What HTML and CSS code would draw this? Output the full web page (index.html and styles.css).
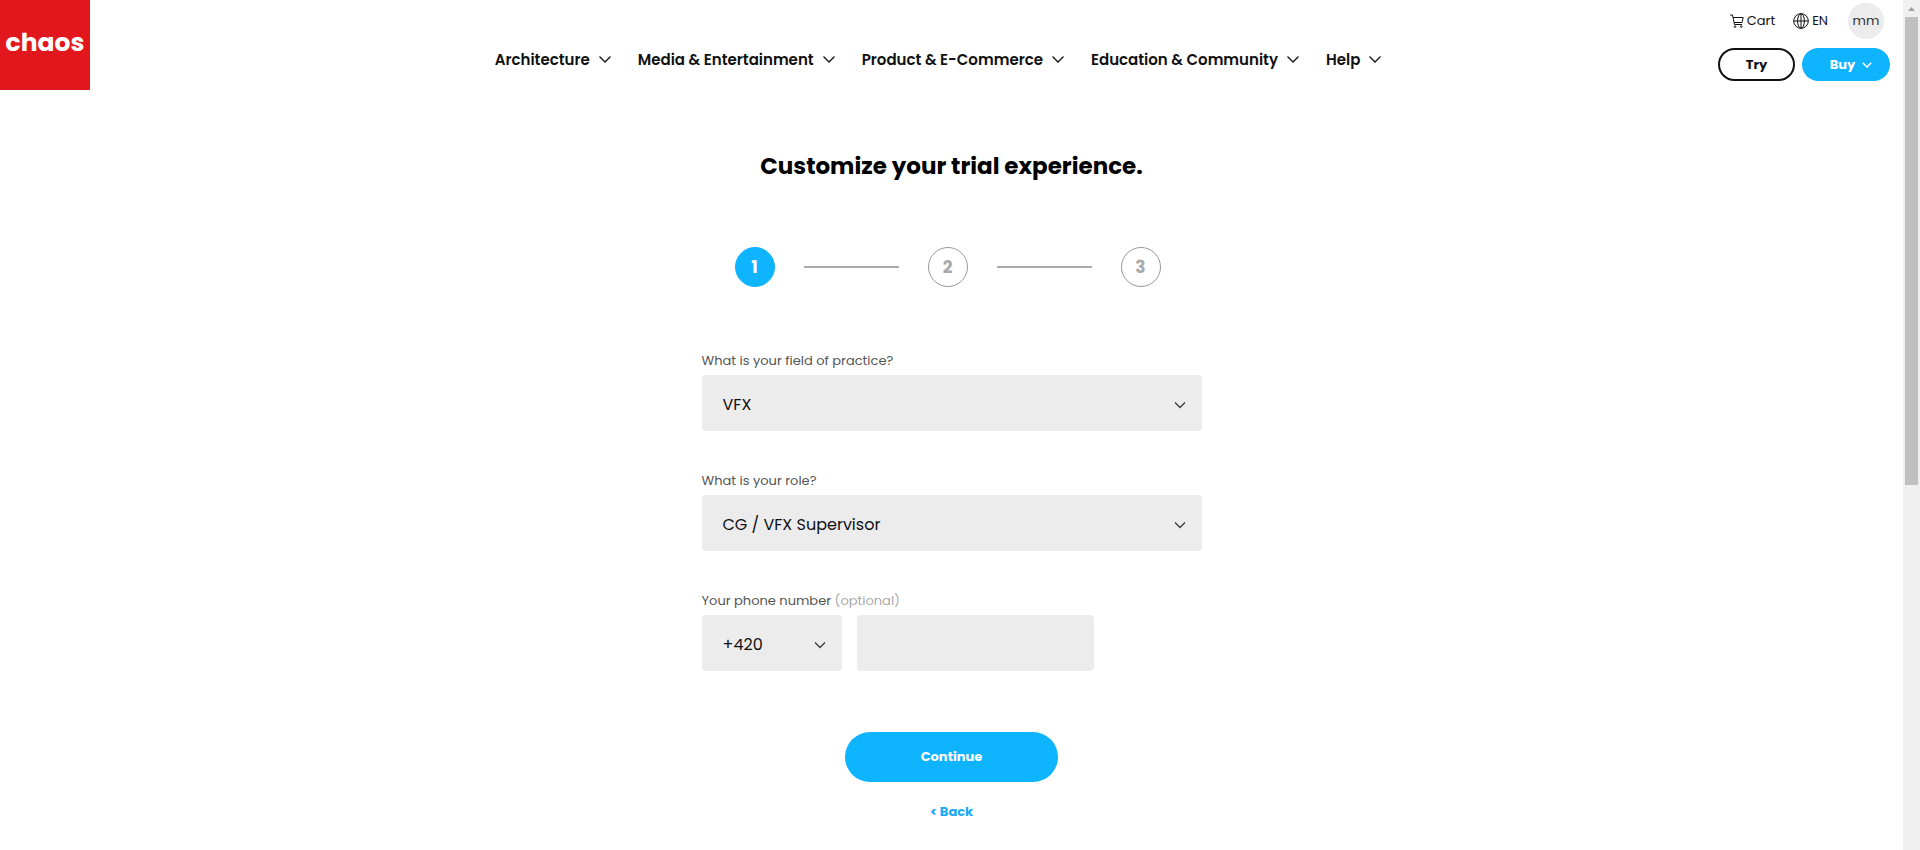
FILE: index.html
```html
<!DOCTYPE html>
<html lang="en">
<head>
    <meta charset="UTF-8">
    <meta name="viewport" content="width=device-width, initial-scale=1.0">
    <title>Chaos - Trial</title>
    <link rel="stylesheet" href="styles.css">
</head>
<body>
    <div class="page">
        <header class="header">
            <a class="logo" href="#">chaos</a>
            <nav class="nav">
                <a href="#">Architecture <svg class="arrow" viewBox="0 0 12 7"><path d="M0.5 0.5L6 6L11.5 0.5"/></svg></a>
                <a href="#">Media &amp; Entertainment <svg class="arrow" viewBox="0 0 12 7"><path d="M0.5 0.5L6 6L11.5 0.5"/></svg></a>
                <a href="#">Product &amp; E-Commerce <svg class="arrow" viewBox="0 0 12 7"><path d="M0.5 0.5L6 6L11.5 0.5"/></svg></a>
                <a href="#">Education &amp; Community <svg class="arrow" viewBox="0 0 12 7"><path d="M0.5 0.5L6 6L11.5 0.5"/></svg></a>
                <a href="#">Help <svg class="arrow" viewBox="0 0 12 7"><path d="M0.5 0.5L6 6L11.5 0.5"/></svg></a>
            </nav>
            <div class="tools">
                <div class="account">
                    <a class="cart" href="#">
                        <svg width="14" height="14" viewBox="0 0 14 14"><path d="M0 1H2.5L4.5 10.5H12M3 3.5H13.2L12 8.5H4.2"/><circle cx="5" cy="12.6" r="0.8"/><circle cx="11.3" cy="12.6" r="0.8"/></svg>
                        Cart
                    </a>
                    <a class="lang" href="#">
                        <svg width="16" height="16" viewBox="0 0 16 16"><circle cx="8" cy="8" r="7.3"/><ellipse cx="8" cy="8" rx="3.4" ry="7.3"/><path d="M0.7 8H15.3M8 0.7V15.3"/></svg>
                        EN
                    </a>
                    <a class="avatar" href="#">mm</a>
                </div>
                <div class="actions">
                    <button class="btn try">Try</button>
                    <button class="btn buy">Buy <svg width="10" height="6" viewBox="0 0 10 6"><path d="M0.8 0.8L5 5L9.2 0.8"/></svg></button>
                </div>
            </div>
        </header>

        <main class="main">
            <h1>Customize your trial experience.</h1>
            <div class="steps">
                <span class="step active">1</span>
                <span class="line"></span>
                <span class="step">2</span>
                <span class="line"></span>
                <span class="step">3</span>
            </div>
            <form class="form">
                <div class="form-group">
                    <label for="field">What is your field of practice?</label>
                    <div class="select">
                        <select id="field">
                            <option>VFX</option>
                        </select>
                        <svg viewBox="0 0 12 8"><path d="M1 1.5L6 6.5L11 1.5"/></svg>
                    </div>
                </div>
                <div class="form-group">
                    <label for="role">What is your role?</label>
                    <div class="select">
                        <select id="role">
                            <option>CG / VFX Supervisor</option>
                        </select>
                        <svg viewBox="0 0 12 8"><path d="M1 1.5L6 6.5L11 1.5"/></svg>
                    </div>
                </div>
                <div class="form-group">
                    <label for="phone">Your phone number <span class="optional">(optional)</span></label>
                    <div class="phone">
                        <div class="select">
                            <select id="code" aria-label="Country code">
                                <option>+420</option>
                            </select>
                            <svg viewBox="0 0 12 8"><path d="M1 1.5L6 6.5L11 1.5"/></svg>
                        </div>
                        <input type="tel" id="phone">
                    </div>
                </div>
                <button type="submit" class="continue">Continue</button>
                <a class="back" href="#">&lt; Back</a>
            </form>
        </main>
    </div>
    <div class="scrollbar">
        <svg width="7" height="4" viewBox="0 0 7 4"><path d="M0 4L3.5 0L7 4Z"/></svg>
        <div class="thumb"></div>
    </div>
</body>
</html>
```
FILE: styles.css
```css
* {
    box-sizing: border-box;
}
body {
    margin: 0;
    display: flex;
    background-color: #fff;
    color: #111;
    font-family: 'Poppins', 'Inter', sans-serif;
}
a {
    color: inherit;
    text-decoration: none;
}
button, input, select {
    font: inherit;
    color: inherit;
    border: none;
}
svg {
    fill: none;
    stroke: currentColor;
    flex: none;
}
.page {
    flex: 1;
    min-width: 0;
}

/* header */
.header {
    display: grid;
    grid-template-columns: 1fr auto 1fr;
    height: 90px;
}
.logo {
    display: flex;
    align-items: center;
    justify-content: center;
    width: 90px;
    height: 90px;
    padding-bottom: 4px;
    background-color: #e2171e;
    color: #fff;
    font-size: 25px;
    font-weight: 700;
}
.nav {
    display: flex;
    align-items: center;
    padding-top: 29px;
}
.nav a {
    display: flex;
    align-items: center;
    gap: 9px;
    padding-right: 27px;
    font-size: 15px;
    font-weight: 600;
    white-space: nowrap;
}
.arrow {
    width: 12px;
    height: 7px;
    stroke-width: 1.3;
}
.tools {
    justify-self: end;
    padding: 3px 13px 0 0;
}
.account {
    display: flex;
    align-items: center;
    justify-content: flex-end;
    padding-right: 6px;
    font-size: 13px;
}
.cart, .lang {
    display: flex;
    align-items: center;
    gap: 3px;
}
.cart {
    margin-right: 18px;
}
.lang {
    margin-right: 20px;
}
.avatar {
    display: flex;
    align-items: center;
    justify-content: center;
    width: 36px;
    height: 36px;
    border-radius: 50%;
    background-color: #ececec;
    color: #333;
}
.actions {
    display: flex;
    gap: 7px;
    margin-top: 9px;
}
.btn {
    display: flex;
    align-items: center;
    justify-content: center;
    height: 33px;
    padding: 0;
    border-radius: 17px;
    font-size: 13px;
    font-weight: 700;
    cursor: pointer;
}
.try {
    width: 77px;
    border: 2px solid #111;
    background-color: #fff;
}
.buy {
    width: 88px;
    gap: 7px;
    padding-left: 10px;
    background-color: #0fb4ff;
    color: #fff;
}
.buy svg {
    stroke-width: 1.6;
}

/* trial form */
.main {
    display: flex;
    flex-direction: column;
    align-items: center;
    padding: 60px 20px 30px;
}
h1 {
    margin: 0;
    font-size: 23px;
    line-height: 32px;
    font-weight: 700;
    color: #000;
}
.steps {
    display: flex;
    align-items: center;
    gap: 29px;
    margin: 65px 8px 64px 0;
}
.step {
    display: flex;
    align-items: center;
    justify-content: center;
    width: 40px;
    height: 40px;
    border: 1px solid #999;
    border-radius: 50%;
    color: #aaa;
    font-size: 17px;
    font-weight: 700;
}
.step.active {
    border-color: #0fb4ff;
    background-color: #0fb4ff;
    color: #fff;
}
.line {
    width: 95px;
    height: 2px;
    background-color: #aaa;
}
.form {
    display: flex;
    flex-direction: column;
    width: 100%;
    max-width: 500px;
}
.form-group {
    margin-bottom: 40px;
}
label {
    display: block;
    padding-bottom: 4px;
    color: #555;
    font-size: 13px;
    line-height: 20px;
}
.optional {
    color: #aaa;
}
.select {
    position: relative;
}
.select select {
    width: 100%;
    height: 56px;
    padding: 2px 40px 0 21px;
    border-radius: 4px;
    background-color: #ececec;
    font-size: 16px;
    appearance: none;
}
.select svg {
    position: absolute;
    top: 26px;
    right: 16px;
    width: 12px;
    height: 8px;
    color: #444;
    stroke-width: 1.5;
    pointer-events: none;
}
.phone {
    display: grid;
    grid-template-columns: 140px 237px;
    gap: 15px;
}
.phone input {
    width: 100%;
    height: 56px;
    padding: 0 20px;
    border-radius: 4px;
    background-color: #ececec;
}
.continue {
    align-self: center;
    width: 213px;
    height: 50px;
    margin: 21px 0 20px;
    border-radius: 25px;
    background-color: #0fb4ff;
    color: #fff;
    font-size: 13px;
    font-weight: 700;
    cursor: pointer;
}
.back {
    align-self: center;
    color: #18a8f5;
    font-size: 13px;
    line-height: 20px;
    font-weight: 700;
}

/* scrollbar */
.scrollbar {
    display: flex;
    flex-direction: column;
    align-items: center;
    gap: 6px;
    width: 17px;
    height: 100vh;
    padding-top: 7px;
    background-color: #f0f0f0;
}
.scrollbar svg {
    fill: #a0a0a0;
    stroke: none;
}
.thumb {
    width: 13px;
    height: 55vh;
    background-color: #c0c0c0;
}
```
